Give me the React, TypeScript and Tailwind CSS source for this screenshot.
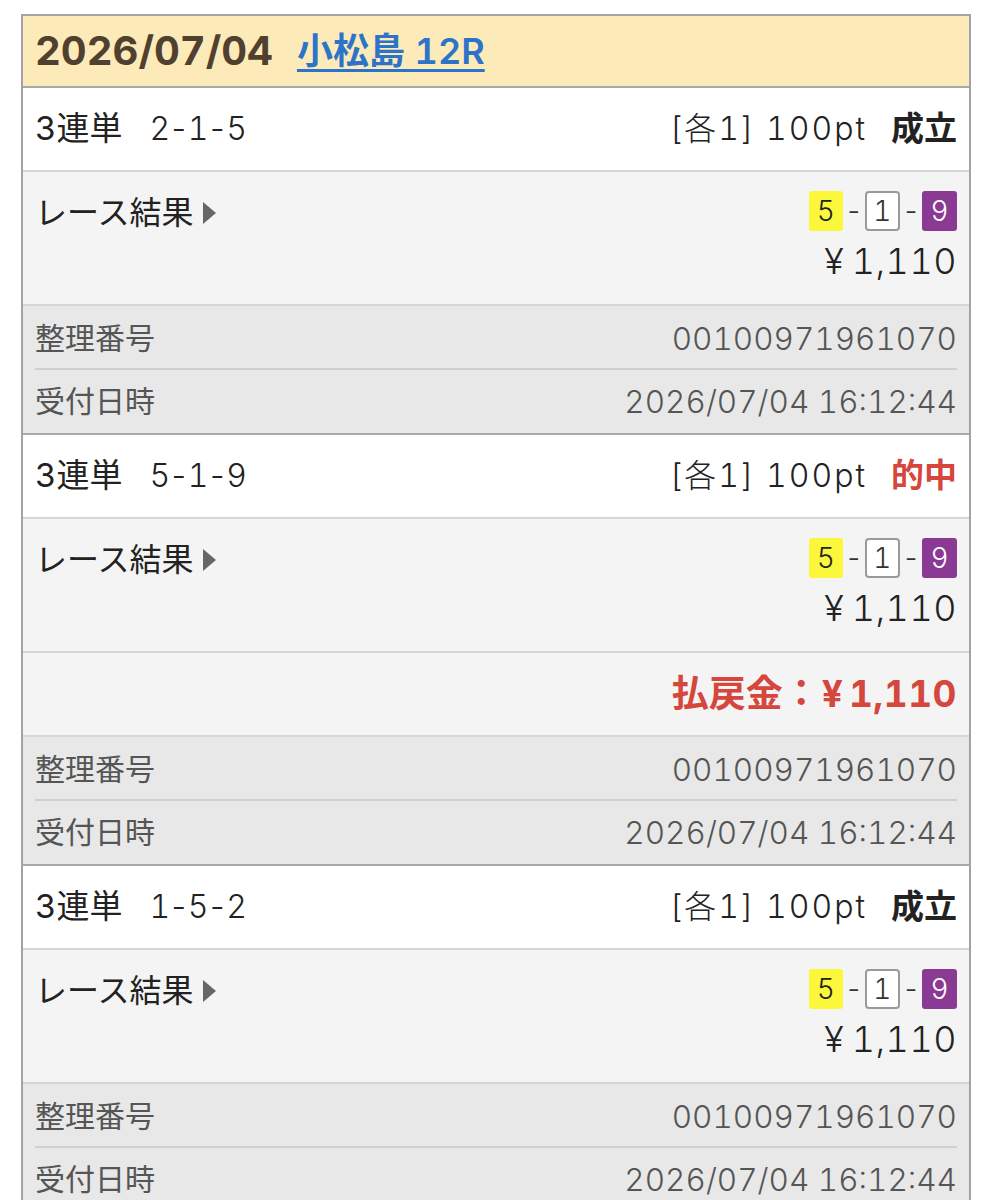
import React from "react";

type Bet = {
  combo: string;
  status: string;
  hit?: boolean;
  payout?: boolean;
};

const bets: Bet[] = [
  { combo: "2-1-5", status: "成立" },
  { combo: "5-1-9", status: "的中", hit: true, payout: true },
  { combo: "1-5-2", status: "成立" },
];

function Result() {
  return (
    <div className="flex flex-col items-end">
      <div className="flex items-center gap-[2px] text-[28px] font-light leading-none">
        <span className="flex h-[40px] w-[34px] items-center justify-center rounded-[3px] bg-[#fbf73a] text-[#222]">5</span>
        <span className="text-[#333]">-</span>
        <span className="flex h-[40px] w-[35px] items-center justify-center rounded-[4px] border-2 border-[#9a9a9a] bg-white text-[#333]">1</span>
        <span className="text-[#333]">-</span>
        <span className="flex h-[40px] w-[35px] items-center justify-center rounded-[3px] bg-[#8b3a93] text-white">9</span>
      </div>
      <div className="mt-[10px] flex items-center gap-[8px] text-[36px] font-light leading-[40px] text-[#222]">
        <span>¥</span>
        <span className="tracking-[0.5px]">1,110</span>
      </div>
    </div>
  );
}

function BetCard({ bet, first }: { bet: Bet; first: boolean }) {
  return (
    <div className={first ? "" : "border-t-2 border-[#a9a9a9]"}>
      <div className="flex h-[84px] items-center justify-between border-b-2 border-[#d6d6d6] bg-white px-3 text-[33px] text-[#222]">
        <div className="flex items-center gap-[27px]">
          <span>3連単</span>
          <span className="text-[32px] font-light tracking-[-1.5px]">{bet.combo}</span>
        </div>
        <div className="flex items-center gap-[24px]">
          <span className="text-[32px] font-light tracking-[2px]">[各1] 100pt</span>
          <span className={bet.hit ? "font-bold text-[#d5463d]" : "font-bold text-[#222]"}>{bet.status}</span>
        </div>
      </div>
      <div className="flex h-[134px] items-start justify-between border-b-2 border-[#d6d6d6] bg-[#f4f4f4] px-3 pt-[19px]">
        <div className="flex items-center gap-[10px] pt-[2px] text-[32px] leading-[40px] text-[#222]">
          <span>レース結果</span>
          <svg width="13" height="22" viewBox="0 0 13 22">
            <path d="M0 0 L13 11 L0 22 Z" fill="#666" />
          </svg>
        </div>
        <Result />
      </div>
      {bet.payout && (
        <div className="flex h-[84px] items-center justify-end border-b-2 border-[#d6d6d6] bg-[#f4f4f4] px-3 text-[37px] font-bold text-[#d5463d]">
          <span>払戻金：</span>
          <span className="ml-[2px]">¥</span>
          <span className="ml-[6px] tracking-[0.5px]">1,110</span>
        </div>
      )}
      <div className="bg-[#e8e8e8] text-[30px] text-[#555]">
        <div className="mx-3 flex h-[64px] items-center justify-between border-b-2 border-[#cfcfcf] pt-[3px]">
          <span>整理番号</span>
          <span className="text-[31.5px] font-light">00100971961070</span>
        </div>
        <div className="mx-3 flex h-[63px] items-center justify-between">
          <span>受付日時</span>
          <span className="text-[31.5px] font-light">2026/07/04 16:12:44</span>
        </div>
      </div>
    </div>
  );
}

export default function App() {
  return (
    <div
      className="h-[1200px] overflow-hidden bg-white pt-[14px] tabular-nums"
      style={{ fontFamily: '"Inter", "Noto Sans CJK JP", sans-serif' }}
    >
      <div className="mx-[21px] border-2 border-[#a3a3a3]">
        <div className="flex h-[72px] items-center gap-[24px] border-b-2 border-[#a9a9a9] bg-[#fdeab9] px-3">
          <span className="text-[40px] font-bold text-[#50402f]">2026/07/04</span>
          <a href="#" className="text-[36px] font-semibold text-[#2c74c9] underline underline-offset-[5px]">
            小松島 12R
          </a>
        </div>
        {bets.map((b, i) => (
          <BetCard key={i} bet={b} first={i === 0} />
        ))}
      </div>
    </div>
  );
}
